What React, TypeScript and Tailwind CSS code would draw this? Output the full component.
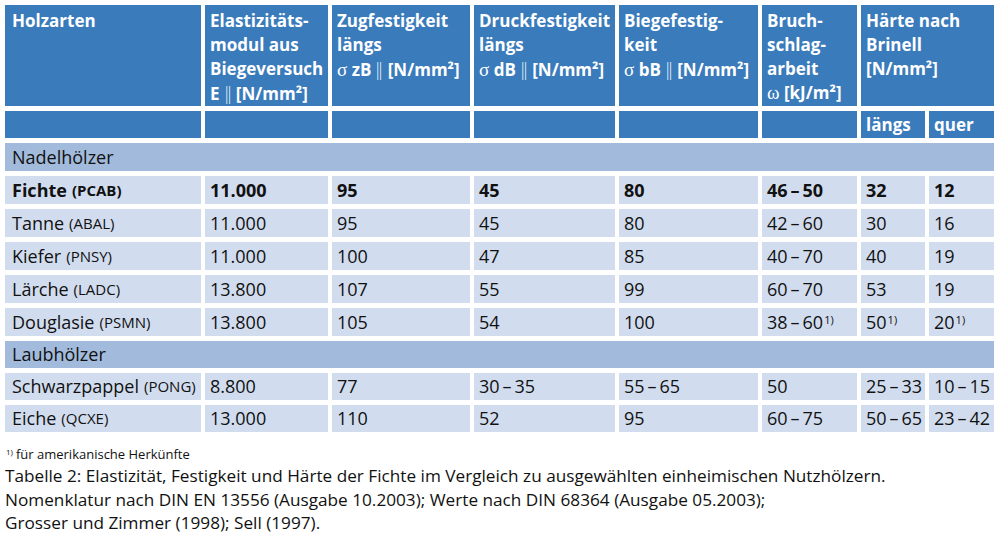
import React from 'react';

const font = { fontFamily: '"Open Sans", "Noto Sans", sans-serif' };

type Row = {
  name: string;
  code: string;
  vals: string[];
  bold?: boolean;
  sup?: boolean[];
};

const nadel: Row[] = [
  { name: 'Fichte', code: 'PCAB', vals: ['11.000', '95', '45', '80', '46\u2009–\u200950', '32', '12'], bold: true },
  { name: 'Tanne', code: 'ABAL', vals: ['11.000', '95', '45', '80', '42\u2009–\u200960', '30', '16'] },
  { name: 'Kiefer', code: 'PNSY', vals: ['11.000', '100', '47', '85', '40\u2009–\u200970', '40', '19'] },
  { name: 'Lärche', code: 'LADC', vals: ['13.800', '107', '55', '99', '60\u2009–\u200970', '53', '19'] },
  {
    name: 'Douglasie',
    code: 'PSMN',
    vals: ['13.800', '105', '54', '100', '38\u2009–\u200960', '50', '20'],
    sup: [false, false, false, false, true, true, true],
  },
];

const laub: Row[] = [
  { name: 'Schwarzpappel', code: 'PONG', vals: ['8.800', '77', '30\u2009–\u200935', '55\u2009–\u200965', '50', '25\u2009–\u200933', '10\u2009–\u200915'] },
  { name: 'Eiche', code: 'QCXE', vals: ['13.000', '110', '52', '95', '60\u2009–\u200975', '50\u2009–\u200965', '23\u2009–\u200942'] },
];

function Sup() {
  return <sup className="text-[11px] font-normal relative -top-[2px] ml-px">1)</sup>;
}

function Greek({ c }: { c: string }) {
  return (
    <span className="font-normal text-[19px]" style={{ fontFamily: '"Liberation Serif", serif' }}>
      {c}
    </span>
  );
}

function Par() {
  return <span className="font-light text-[19px] mx-[3px] scale-x-75 inline-block">‖</span>;
}

function DataRow({ r, h }: { r: Row; h: string }) {
  return (
    <>
      <div className={`${h} bg-[#d1ddef] pl-[7px] flex items-center text-[18px] text-[#111] whitespace-nowrap ${r.bold ? 'font-bold' : ''}`}>
        {r.name}
        <span className="text-[15px] ml-[5px]">({r.code})</span>
      </div>
      {r.vals.map((v, i) => (
        <div
          key={i}
          className={`${h} bg-[#d1ddef] pl-[5px] flex items-center text-[18px] text-[#111] whitespace-nowrap ${r.bold ? 'font-bold' : ''}`}
        >
          {v}
          {r.sup && r.sup[i] ? <Sup /> : null}
        </div>
      ))}
    </>
  );
}

function Group({ label, h }: { label: string; h: string }) {
  return (
    <div className={`${h} col-span-8 bg-[#a2bbdc] pl-[7px] flex items-center text-[18px] text-[#111]`}>{label}</div>
  );
}

export default function App() {
  const head = 'bg-[#3a7bbb] text-white font-bold text-[17px] leading-[24px] pt-[4px] pl-[5px]';
  const sub = 'h-[27px] bg-[#3a7bbb] text-white font-bold text-[17px] pl-[5px] flex items-center';
  return (
    <div className="w-[1000px] h-[543px] bg-white overflow-hidden" style={font}>
      <div className="pt-[5px] pl-[5px]">
        <div className="grid grid-cols-[196px_123px_138px_141px_139px_95px_64px_65px] gap-x-[4px] gap-y-[5px]">
          <div className={`${head} h-[101px] pl-[7px]`}>Holzarten</div>
          <div className={head}>
            Elastizitäts-
            <br />
            modul aus
            <br />
            Biegeversuch
            <br />E<Par />[N/mm²]
          </div>
          <div className={head}>
            Zugfestigkeit
            <br />
            längs
            <br />
            <Greek c="σ" /> zB<Par />[N/mm²]
          </div>
          <div className={head}>
            Druckfestigkeit
            <br />
            längs
            <br />
            <Greek c="σ" /> dB<Par />[N/mm²]
          </div>
          <div className={head}>
            Biegefestig-
            <br />
            keit
            <br />
            <Greek c="σ" /> bB<Par />[N/mm²]
          </div>
          <div className={head}>
            Bruch-
            <br />
            schlag-
            <br />
            arbeit
            <br />
            <Greek c="ω" /> [kJ/m²]
          </div>
          <div className={`${head} col-span-2`}>
            Härte nach
            <br />
            Brinell
            <br />
            [N/mm²]
          </div>

          <div className={sub} />
          <div className={sub} />
          <div className={sub} />
          <div className={sub} />
          <div className={sub} />
          <div className={sub} />
          <div className={sub}>längs</div>
          <div className={sub}>quer</div>

          <Group label="Nadelhölzer" h="h-[28px]" />
          {nadel.map((r) => (
            <DataRow key={r.name} r={r} h="h-[28px]" />
          ))}
          <Group label="Laubhölzer" h="h-[27px]" />
          {laub.map((r) => (
            <DataRow key={r.name} r={r} h="h-[27px]" />
          ))}
        </div>

        <div className="mt-[14px] text-[13px] leading-[16px] text-[#111] pl-[1px]">
          <span className="text-[8px] relative -top-[4px] mr-[3px]">1)</span>für amerikanische Herkünfte
        </div>
        <div className="text-[17.2px] leading-[23.5px] text-[#111] mt-0">
          Tabelle 2: Elastizität, Festigkeit und Härte der Fichte im Vergleich zu ausgewählten einheimischen Nutzhölzern.
          <br />
          Nomenklatur nach DIN EN 13556 (Ausgabe 10.2003); Werte nach DIN 68364 (Ausgabe 05.2003);
          <br />
          Grosser und Zimmer (1998); Sell (1997).
        </div>
      </div>
    </div>
  );
}
